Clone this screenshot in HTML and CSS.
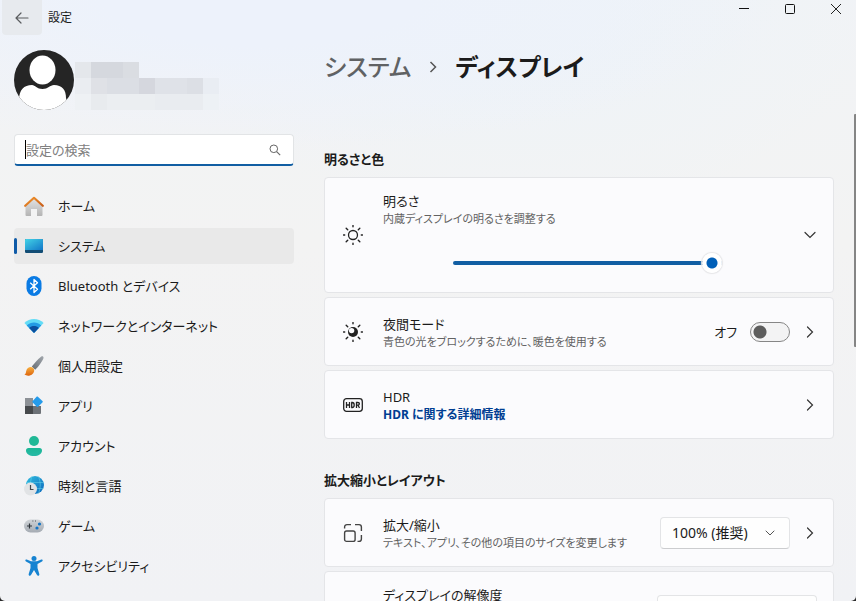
FILE: index.html
```html
<!DOCTYPE html>
<html lang="ja">
<head>
<meta charset="utf-8">
<meta name="viewport" content="width=device-width, initial-scale=1">
<title>設定</title>
<link rel="stylesheet" href="styles.css">
</head>
<body>
<div class="window">
  <header class="titlebar">
    <button class="back" aria-label="戻る"><svg width="14" height="12" viewBox="0 0 14 12"><path d="M6 1 1 6l5 5M1.500 6H13" fill="none" stroke="#5a5c5e" stroke-width="1.200" stroke-linecap="round" stroke-linejoin="round"/></svg></button>
    <span class="app-name">設定</span>
    <div class="window-controls">
      <button aria-label="最小化"><svg width="12" height="12" viewBox="0 0 12 12"><path d="M1 5.500h10" stroke="#111" fill="none"/></svg></button>
      <button aria-label="最大化"><svg width="12" height="12" viewBox="0 0 12 12"><rect x="1.500" y="1.500" width="9" height="9" rx="1" fill="none" stroke="#111"/></svg></button>
      <button aria-label="閉じる"><svg width="12" height="12" viewBox="0 0 12 12"><path d="m1 1 10 10M11 1 1 11" stroke="#222" fill="none"/></svg></button>
    </div>
  </header>

  <div class="layout">
    <aside class="sidebar">
      <div class="profile">
        <svg class="avatar" viewBox="0 0 60 60" aria-hidden="true">
          <defs><clipPath id="face"><circle cx="30" cy="30" r="30"/></clipPath></defs>
          <g clip-path="url(#face)"><rect width="60" height="60" fill="#252525"/><ellipse cx="28.500" cy="20" rx="13" ry="14.500" fill="#fff"/><path d="M5 50c0-10 5-15 13-15 3 0 5 4 10.500 4S36 35 40 35c8 0 12 5 12 13l4 14H4Z" fill="#fff"/></g>
        </svg>
        <svg class="redacted" width="146" height="48" viewBox="0 0 146 48" aria-hidden="true" shape-rendering="crispEdges">
          <path d="M1 0h16v16H1Z" fill="#e4e7eb"/><path d="M17 0h32v16H17Z" fill="#d5d8de"/><path d="M49 0h16v16H49Z" fill="#dadde2"/>
          <path d="M1 16h16v16H1Z" fill="#eaedf1"/><path d="M17 16h16v16H17Z" fill="#dfe1e6"/><path d="M33 16h32v16H33Z" fill="#dbdee4"/><path d="M65 16h16v16H65Z" fill="#d5d7de"/><path d="M81 16h32v16H81Z" fill="#dfe2e8"/><path d="M113 16h16v16h-16Z" fill="#dcdfe5"/><path d="M129 16h16v16h-16Z" fill="#e9edf3"/>
          <path d="M1 32h16v16H1Z" fill="#eef1f4"/><path d="M17 32h16v16H17Z" fill="#e8ebee"/><path d="M33 32h48v16H33Z" fill="#ebeef1"/><path d="M81 32h48v16H81Z" fill="#e9ecf0"/><path d="M129 32h16v16h-16Z" fill="#edf1f5"/>
        </svg>
      </div>

      <div class="search">
        <input type="text" placeholder="設定の検索" aria-label="設定の検索">
        <span class="caret"></span>
        <svg width="12" height="12" viewBox="0 0 12 12" aria-hidden="true"><circle cx="4.800" cy="4.800" r="3.800" fill="none" stroke="#666"/><path d="m7.600 7.600 3.600 3.600" stroke="#666" stroke-width="1.100"/></svg>
      </div>

      <nav class="nav" aria-label="設定">
        <a href="#"><svg viewBox="0 0 20 20" aria-hidden="true"><defs><linearGradient id="wall" x2="0" y2="1"><stop stop-color="#e4e4e4"/><stop offset="1" stop-color="#b4b4b4"/></linearGradient><linearGradient id="roof" x2="1" y2="1"><stop stop-color="#f3962c"/><stop offset="1" stop-color="#c95d18"/></linearGradient></defs><path d="M1.500 9.500 10 2l8.500 7.500V19a1 1 0 0 1-1 1H13v-7H7v7H2.500a1 1 0 0 1-1-1Z" fill="url(#wall)"/><path d="M1.200 9.800 10 1.800l8.800 8" fill="none" stroke="url(#roof)" stroke-width="2.200" stroke-linecap="round" stroke-linejoin="round"/></svg>ホーム</a>
        <a href="#" class="current" aria-current="page"><svg viewBox="0 0 20 20" aria-hidden="true"><defs><linearGradient id="screen" x2="1" y2="1"><stop stop-color="#43d3e6"/><stop offset="1" stop-color="#1277c8"/></linearGradient></defs><rect x="1" y="3" width="18" height="14" rx="1.200" fill="#124d75"/><path d="M2.200 3h15.600A1.200 1.200 0 0 1 19 4.200V14H1V4.200A1.200 1.200 0 0 1 2.200 3Z" fill="url(#screen)"/></svg>システム</a>
        <a href="#"><svg viewBox="0 0 20 20" aria-hidden="true"><rect x="2.500" width="15" height="20" rx="7.500" fill="#0a7be4"/><path d="m6.200 6.700 7.300 6.500L10 16.500v-13l3.500 3.300-7.300 6.500" fill="none" stroke="#fff" stroke-width="1.300" stroke-linejoin="round"/></svg>Bluetooth とデバイス</a>
        <a href="#"><svg viewBox="0 0 20 20" aria-hidden="true"><path d="M.4 7C5.500 1.600 14.500 1.600 19.600 7L10 17Z" fill="#63dcf6"/><path d="M2.700 9.400c4-4 10.600-4 14.600 0L10 17Z" fill="#239be4"/><path d="M5.200 12c2.600-2.600 7-2.600 9.600 0L10 17Z" fill="#0b4f9e"/></svg>ネットワークとインターネット</a>
        <a href="#"><svg viewBox="0 0 20 20" aria-hidden="true"><defs><linearGradient id="handle" x1="1" x2="0" y2="1"><stop stop-color="#a2a7ad"/><stop offset="1" stop-color="#656c73"/></linearGradient><linearGradient id="bristle" x2="0" y2="1"><stop stop-color="#f8af40"/><stop offset="1" stop-color="#dc650d"/></linearGradient></defs><path d="M17 .8c1.800-1.300 3.200.1 2.200 2.200-2 4-5.500 8.700-8 10.700L7.800 10.500C10.500 7.500 14 3 17 .8Z" fill="url(#handle)"/><path d="M9 11.800c2 1.800 1.300 4.800-.8 6.400C6 20 3 20.200.4 18.600c1.500-.6 1.400-2 1.800-3.600.8-3.600 4.500-5.100 6.800-3.200Z" fill="url(#bristle)"/></svg>個人用設定</a>
        <a href="#"><svg viewBox="0 0 20 20" aria-hidden="true"><path d="M1 2h8v8H1Z" fill="#8d9196"/><path d="M1 10h8v8H1Z" fill="#46494c"/><path d="M9 10h8v7a1 1 0 0 1-1 1H9Z" fill="#6d7277"/><path d="m13.600.6 4.800 4.500c.5.500.5.800 0 1.300l-4.300 4.300c-.5.500-.8.500-1.300 0L8.700 6.400c-.5-.5-.5-.8 0-1.300l4.100-4.500c.3-.3.500-.3.800 0Z" fill="#259bea"/></svg>アプリ</a>
        <a href="#"><svg viewBox="0 0 20 20" aria-hidden="true"><defs><linearGradient id="person" x2="0" y2="1"><stop stop-color="#1cb795"/><stop offset="1" stop-color="#26b9a6"/></linearGradient></defs><circle cx="10" cy="5" r="5" fill="#20b896"/><path d="M4.500 12h11a2.500 2.500 0 0 1 2.500 2.500c0 3.500-3.500 5.500-8 5.500s-8-2-8-5.500A2.500 2.500 0 0 1 4.500 12Z" fill="url(#person)"/></svg>アカウント</a>
        <a href="#"><svg viewBox="0 0 20 20" aria-hidden="true"><defs><linearGradient id="globe" x2="1" y2="1"><stop stop-color="#31bde0"/><stop offset="1" stop-color="#0c68bd"/></linearGradient></defs><circle cx="11" cy="9" r="9" fill="url(#globe)"/><path d="M2 6.500h18M3 12.500h17M14 0c3 5 3 13 0 18M8 0C6.500 4 6 8 7 12" fill="none" stroke="#6fdced" stroke-width=".8" opacity=".6"/><circle cx="6.500" cy="13" r="6.500" fill="#e1e3e5"/><path d="M6.500 9v4.500h3" fill="none" stroke="#44494d" stroke-width="1.200"/></svg>時刻と言語</a>
        <a href="#"><svg viewBox="0 0 20 20" aria-hidden="true"><defs><linearGradient id="pad" x2="0" y2="1"><stop stop-color="#d0d4d8"/><stop offset="1" stop-color="#a5abb3"/></linearGradient></defs><rect y="3.500" width="20" height="13" rx="6.500" fill="url(#pad)"/><path d="M5.500 7.500v5M3 10h5" stroke="#30363c" stroke-width="1.200"/><circle cx="15.500" cy="8" r="1.600" fill="#1474c4"/><circle cx="13" cy="12" r="1.600" fill="#1474c4"/><path d="M8.500 5h.8M11 5h.8" stroke="#30363c"/></svg>ゲーム</a>
        <a href="#"><svg viewBox="0 0 20 20" aria-hidden="true"><circle cx="10" cy="2.500" r="2.500" fill="#1683d1"/><path d="M2.700 3.500 7 5.300h6l4.300-1.800c1.200-.5 2 1.200.7 1.900L13.500 8v4l1.800 6c.4 1.600-1.500 2.500-2.300 1L10 14l-3 5c-.8 1.500-2.700.6-2.300-1l1.800-6V8L2 5.400c-1.300-.7-.5-2.400.7-1.900Z" fill="#1683d1"/></svg>アクセシビリティ</a>
      </nav>
    </aside>

    <main class="content">
      <h1 class="breadcrumb"><a href="#">システム</a><svg width="8" height="14" viewBox="0 0 8 14" aria-hidden="true"><path d="m1.500 2 5 5-5 5" fill="none" stroke="#555" stroke-width="1.500"/></svg><span>ディスプレイ</span></h1>

      <section class="group">
        <h2>明るさと色</h2>
        <div class="card card-slider">
          <svg class="icon" viewBox="0 0 20 20" aria-hidden="true"><circle cx="10" cy="10" r="4.500" fill="none" stroke="#222" stroke-width="1.300"/><path d="M10 .5v1.200M10 18.300v1.200M.5 10h1.200M18.300 10h1.200M3.200 3.200l1.500 1.500M15.300 15.300l1.500 1.500M3.200 16.800l1.500-1.500M15.300 4.700l1.500-1.500" stroke="#222" stroke-width="1.400" stroke-linecap="round"/></svg>
          <div class="text">
            <label class="title" for="brightness">明るさ</label>
            <p>内蔵ディスプレイの明るさを調整する</p>
            <input id="brightness" type="range" min="0" max="100" value="100">
          </div>
          <button class="chevron" aria-label="展開"><svg width="12" height="12" viewBox="0 0 12 12"><path d="m1 3.500 5 5 5-5" fill="none" stroke="#333" stroke-width="1.200" stroke-linecap="round"/></svg></button>
        </div>

        <div class="card">
          <svg class="icon" viewBox="0 0 20 20" aria-hidden="true"><circle cx="10" cy="10" r="5" fill="#222"/><circle cx="8.600" cy="8.600" r="2.700" fill="#fbfbfd"/><path d="M10 .5v1.200M10 18.300v1.200M.5 10h1.200M18.300 10h1.200M3.200 3.200l1.500 1.500M15.300 15.300l1.500 1.500M3.200 16.800l1.500-1.500M15.300 4.700l1.500-1.500" stroke="#222" stroke-width="1.400" stroke-linecap="round"/></svg>
          <div class="text">
            <div class="title">夜間モード</div>
            <p>青色の光をブロックするために、暖色を使用する</p>
          </div>
          <label class="switch">オフ<input type="checkbox" role="switch"></label>
          <button class="chevron" aria-label="夜間モードを開く"><svg width="12" height="12" viewBox="0 0 12 12"><path d="m3.500 1 5 5-5 5" fill="none" stroke="#333" stroke-width="1.200" stroke-linecap="round"/></svg></button>
        </div>

        <div class="card">
          <svg class="icon" viewBox="0 0 20 20" aria-hidden="true"><rect x=".7" y="3.700" width="18.600" height="12.600" rx="2.800" fill="none" stroke="#222" stroke-width="1.300"/><path d="M3.500 7v6M6.500 7v6M3.500 10h3M8.700 7.500v5M8.200 7.500h1c1.400 0 2 1 2 2.500s-.6 2.500-2 2.500h-1M13.500 13V7.500h1.400c2 0 2 2.700 0 2.700h-1.400M15 10.200l1.500 2.800" fill="none" stroke="#222" stroke-width="1.300"/></svg>
          <div class="text">
            <div class="title">HDR</div>
            <p><a class="link" href="#">HDR に関する詳細情報</a></p>
          </div>
          <button class="chevron" aria-label="HDR を開く"><svg width="12" height="12" viewBox="0 0 12 12"><path d="m3.500 1 5 5-5 5" fill="none" stroke="#333" stroke-width="1.200" stroke-linecap="round"/></svg></button>
        </div>
      </section>

      <section class="group">
        <h2>拡大縮小とレイアウト</h2>
        <div class="card">
          <svg class="icon" viewBox="0 0 20 20" aria-hidden="true"><rect x="1.600" y="8" width="10.500" height="10.400" rx="2" fill="none" stroke="#444" stroke-width="1.400"/><path d="M1.600 5.500V4a2.400 2.400 0 0 1 2.400-2.400h4M12 1.600h4A2.400 2.400 0 0 1 18.400 4v4M18.400 12v4a2.400 2.400 0 0 1-2.400 2.400h-1.500" fill="none" stroke="#444" stroke-width="1.400"/></svg>
          <div class="text">
            <label class="title" for="scale">拡大/縮小</label>
            <p>テキスト、アプリ、その他の項目のサイズを変更します</p>
          </div>
          <div class="select">
            <select id="scale"><option>100% (推奨)</option></select>
            <svg width="10" height="10" viewBox="0 0 10 10" aria-hidden="true"><path d="m1 3 4 4 4-4" fill="none" stroke="#555" stroke-linecap="round"/></svg>
          </div>
          <button class="chevron" aria-label="拡大/縮小を開く"><svg width="12" height="12" viewBox="0 0 12 12"><path d="m3.500 1 5 5-5 5" fill="none" stroke="#333" stroke-width="1.200" stroke-linecap="round"/></svg></button>
        </div>

        <div class="card card-tall">
          <div class="icon"></div>
          <div class="text">
            <label class="title" for="resolution">ディスプレイの解像度</label>
          </div>
          <div class="select select-wide"><select id="resolution"></select></div>
        </div>
      </section>
    </main>
  </div>
  <div class="scrollbar"></div>
</div>
</body>
</html>
```
FILE: styles.css
```css
* {
  box-sizing: border-box;
}

body {
  margin: 0;
  background: #2b2b2b;
  color: #1b1b1b;
  font: 13px/20px "Noto Sans", "Noto Sans CJK JP", sans-serif;
  font-feature-settings: "palt";
}

button,
input,
select {
  font: inherit;
  font-feature-settings: inherit;
  color: inherit;
}

button {
  display: flex;
  align-items: center;
  justify-content: center;
  padding: 0;
  border: 0;
  background: none;
}

a {
  color: inherit;
  text-decoration: none;
}

h1,
h2,
p {
  margin: 0;
}

svg {
  flex: none;
}

.window {
  position: relative;
  display: flex;
  flex-direction: column;
  height: 100vh;
  overflow: hidden;
  border-radius: 0 0 5px 5px;
  background:
    radial-gradient(ellipse 520px 150px at 260px 0, #edf2fb 30%, transparent),
    radial-gradient(ellipse 360px 220px at 520px 0, #edf3f8, transparent),
    linear-gradient(#f1f3f6, #f3f3f3 40%, #f1f2f5);
}

.titlebar {
  display: flex;
  flex: none;
  height: 36px;
  padding-left: 2px;
}

.back {
  width: 40px;
  height: 35px;
  border-radius: 0 0 4px 4px;
  background: #e7eaee;
}

.app-name {
  margin-left: 6px;
  font-size: 12px;
  line-height: 35px;
}

.window-controls {
  display: flex;
  gap: 6px;
  margin-left: auto;
}

.window-controls button {
  width: 40px;
  height: 18px;
}

.layout {
  display: flex;
  flex: 1;
  gap: 30px;
  min-height: 0;
  padding: 0 22px 0 14px;
}

.sidebar {
  flex: none;
  width: 280px;
  padding-top: 14px;
}

.profile {
  display: flex;
  align-items: center;
  height: 60px;
}

.avatar {
  width: 60px;
  height: 60px;
}

.redacted {
  margin-top: 12px;
}

.search {
  position: relative;
  margin: 24px 0 22px;
}

.search input {
  display: block;
  width: 100%;
  height: 32px;
  padding: 0 36px 0 11px;
  border: 1px solid #e2e4e6;
  border-bottom: 2px solid #115ea3;
  border-radius: 4px;
  outline: 0;
  background: #fff;
}

.search input::placeholder {
  color: #808080;
  opacity: 1;
}

.search svg {
  position: absolute;
  top: 10px;
  right: 13px;
}

.caret {
  position: absolute;
  top: 6px;
  left: 11px;
  width: 1px;
  height: 19px;
  background: #000;
}

.nav {
  display: flex;
  flex-direction: column;
  gap: 4px;
}

.nav a {
  position: relative;
  display: flex;
  align-items: center;
  gap: 14px;
  height: 36px;
  padding-left: 10px;
  border-radius: 4px;
}

.nav svg {
  width: 20px;
  height: 20px;
}

.nav .current {
  background: #e9e9e9;
}

.current::before {
  content: "";
  position: absolute;
  top: 10px;
  left: 0;
  width: 3px;
  height: 16px;
  border-radius: 2px;
  background: #0f5ba8;
}

.content {
  flex: 1;
  min-width: 0;
  padding-top: 12px;
}

.breadcrumb {
  display: flex;
  align-items: center;
  gap: 18px;
  margin-bottom: 63px;
  font-size: 24px;
  font-weight: 700;
  line-height: 38px;
}

.breadcrumb a {
  color: #606264;
  font-weight: 500;
}

.group {
  display: flex;
  flex-direction: column;
  gap: 4px;
  margin-bottom: 31px;
}

.group h2 {
  margin-bottom: 4px;
  font-size: 13px;
  font-weight: 700;
  line-height: 20px;
}

.card {
  display: flex;
  align-items: center;
  min-height: 69px;
  padding: 0 13px 0 18px;
  border: 1px solid #e4e5e8;
  border-radius: 4px;
  background: #fbfbfd;
}

.icon {
  width: 20px;
  height: 20px;
  margin-right: 20px;
}

.text {
  flex: 1;
  min-width: 0;
}

.title {
  display: block;
}

.text p {
  color: #626262;
  font-size: 11px;
  line-height: 16px;
}

.text .link {
  color: #003e92;
  font-size: 12px;
  font-weight: 700;
}

.chevron {
  flex: none;
  width: 20px;
  height: 20px;
  margin-left: 10px;
}

.card-slider .text {
  display: flex;
  flex-direction: column;
  padding: 13px 0 19px;
}

.card-slider input {
  height: 20px;
  margin: 26px 68px 0 70px;
  appearance: none;
  background: none;
}

.card-slider input::-webkit-slider-runnable-track {
  height: 4px;
  border-radius: 2px;
  background: #115ea3;
}

.card-slider input::-webkit-slider-thumb {
  width: 20px;
  height: 20px;
  margin-top: -8px;
  appearance: none;
  border-radius: 50%;
  background: radial-gradient(circle, #005fb8 5px, #fff 6px);
  box-shadow: 0 0 1px 1px #e6e6e8;
}

.switch {
  display: flex;
  align-items: center;
  gap: 13px;
}

.switch input {
  width: 40px;
  height: 20px;
  margin: 0;
  appearance: none;
  border: 1px solid #868686;
  border-radius: 10px;
  background: radial-gradient(circle at 9px 9px, #5d5d5d 6px, #f3f3f4 7px);
}

.select {
  position: relative;
  width: 130px;
}

.select select {
  display: block;
  width: 100%;
  height: 32px;
  padding: 0 32px 0 11px;
  appearance: none;
  border: 1px solid #e3e4e6;
  border-bottom-color: #cccdcf;
  border-radius: 4px;
  background: #fefefe;
  font-size: 14px;
}

.select svg {
  position: absolute;
  top: 11px;
  right: 15px;
}

.card-tall {
  min-height: 80px;
}

.card-tall .text {
  align-self: flex-start;
  padding-top: 13px;
}

.card-tall .select-wide {
  width: 160px;
  margin-right: 3px;
}

.scrollbar {
  position: absolute;
  top: 114px;
  right: 0;
  width: 2px;
  height: 233px;
  border-radius: 1px 0 0 1px;
  background: #858585;
}
```
